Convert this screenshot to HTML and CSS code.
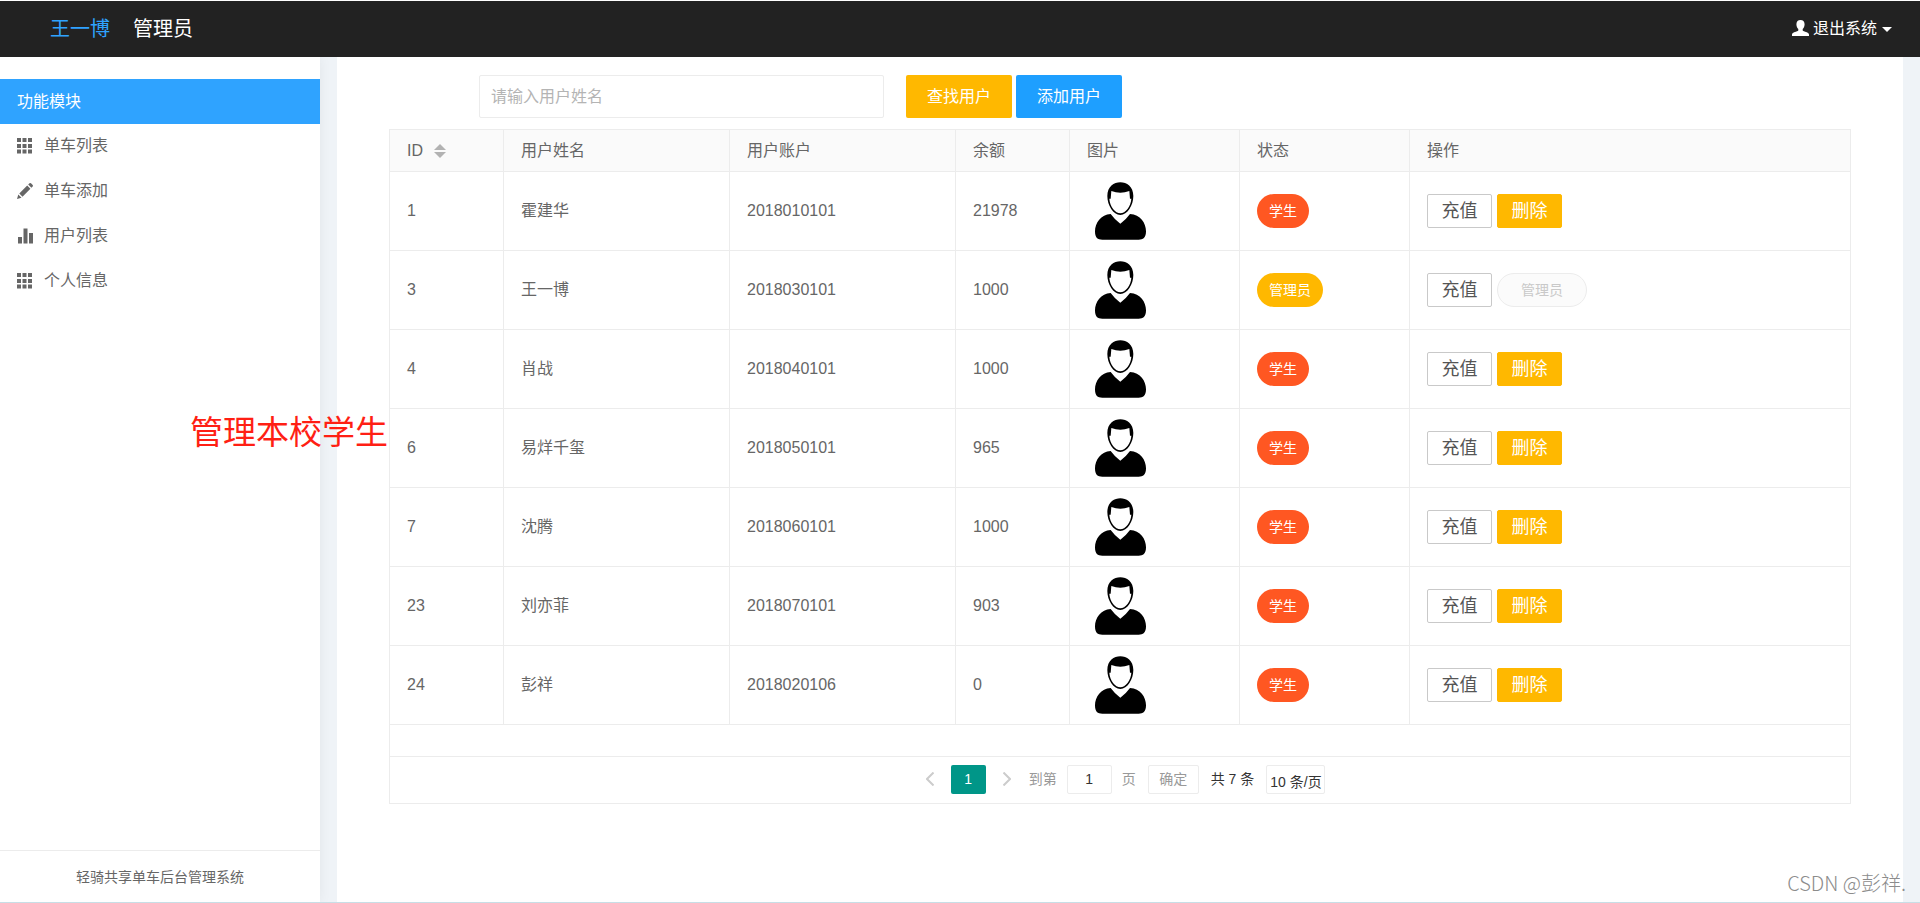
FILE: index.html
```html
<!DOCTYPE html>
<html lang="zh-CN">
<head>
<meta charset="utf-8">
<title>轻骑共享单车后台管理系统</title>
<link rel="stylesheet" href="styles.css">
</head>
<body>
<svg class="defs" width="0" height="0" aria-hidden="true">
  <symbol id="grid" viewBox="0 0 16 16"><path d="M0 0h4v4H0zM5.500 0h4v4h-4zM11 0h4v4h-4zM0 6h4v4H0zM5.500 6h4v4h-4zM11 6h4v4h-4zM0 11.500h4v4H0zM5.500 11.500h4v4h-4zM11 11.500h4v4h-4z"/></symbol>
  <symbol id="pencil" viewBox="0 0 16 16"><path d="M0 16l1.300-4.500 3.200 3.200zM2.300 10.500l7.900-7.900 3.200 3.200-7.900 7.900zM11.200 1.600l1.300-1.300q.8-.6 1.500 0l1.700 1.700q.6.8 0 1.500l-1.300 1.300z"/></symbol>
  <symbol id="bars" viewBox="0 0 16 16"><path d="M1 9h4v6.500H1zM6.500 .5h4v15h-4zM12 5h4v10.500h-4z"/></symbol>
  <symbol id="avatar" viewBox="0 0 192 192">
    <path fill-rule="evenodd" d="M100 13C119 13 139 26 139 54C139 82 121 111 100 111C79 111 61 82 61 54C61 26 81 13 100 13ZM73 39L71 62H67C68 85 85 106 100 106C115 106 132 85 133 62H129L127 39Q100 49 73 39Z"/>
    <path d="M71 108Q84 126 100 137Q116 126 129 108C160 110 177 135 177 160C177 180 168 185 155 185H46C32 185 24 180 24 160C24 135 42 110 71 108Z"/>
  </symbol>
</svg>

<header class="topbar">
  <div class="brand"><a class="brand-name" href="#">王一博</a><span>管理员</span></div>
  <button class="logout" type="button">
    <svg class="user-icon" viewBox="0 0 17 16" aria-hidden="true"><path d="M8.500 0C11 0 12.600 1.600 12.600 4.200C12.600 6.500 11.600 8 10.700 9V10.500C11.500 11.700 17 12.200 17 14.500V16H0V14.500C0 12.200 5.500 11.700 6.300 10.500V9C5.400 8 4.400 6.500 4.400 4.200C4.400 1.600 6 0 8.500 0Z"/></svg>
    <span>退出系统</span><i class="caret"></i>
  </button>
</header>

<div class="layout">
  <aside class="sidebar">
    <nav class="menu">
      <a class="menu-item active" href="#">功能模块</a>
      <a class="menu-item" href="#"><svg class="menu-icon"><use href="#grid"/></svg>单车列表</a>
      <a class="menu-item" href="#"><svg class="menu-icon"><use href="#pencil"/></svg>单车添加</a>
      <a class="menu-item" href="#"><svg class="menu-icon"><use href="#bars"/></svg>用户列表</a>
      <a class="menu-item" href="#"><svg class="menu-icon"><use href="#grid"/></svg>个人信息</a>
    </nav>
    <footer class="sidebar-footer">轻骑共享单车后台管理系统</footer>
  </aside>

  <main class="content">
    <form class="search">
      <input class="search-input" type="text" placeholder="请输入用户姓名" aria-label="用户姓名">
      <button class="btn btn-warm" type="button">查找用户</button>
      <button class="btn btn-blue" type="button">添加用户</button>
    </form>

    <section class="panel">
      <table class="users">
        <colgroup><col class="c-small"><col class="c-wide"><col class="c-wide"><col class="c-small"><col class="c-mid"><col class="c-mid"><col></colgroup>
        <thead>
          <tr><th>ID<span class="sort"><i class="sort-up"></i><i class="sort-down"></i></span></th><th>用户姓名</th><th>用户账户</th><th>余额</th><th>图片</th><th>状态</th><th>操作</th></tr>
        </thead>
        <tbody>
          <tr><td>1</td><td>霍建华</td><td>2018010101</td><td>21978</td><td><svg class="avatar"><use href="#avatar"/></svg></td><td><span class="badge">学生</span></td><td><div class="ops"><button class="op" type="button">充值</button><button class="op op-del" type="button">删除</button></div></td></tr>
          <tr><td>3</td><td>王一博</td><td>2018030101</td><td>1000</td><td><svg class="avatar"><use href="#avatar"/></svg></td><td><span class="badge badge-admin">管理员</span></td><td><div class="ops"><button class="op" type="button">充值</button><button class="op op-off" type="button" disabled>管理员</button></div></td></tr>
          <tr><td>4</td><td>肖战</td><td>2018040101</td><td>1000</td><td><svg class="avatar"><use href="#avatar"/></svg></td><td><span class="badge">学生</span></td><td><div class="ops"><button class="op" type="button">充值</button><button class="op op-del" type="button">删除</button></div></td></tr>
          <tr><td>6</td><td>易烊千玺</td><td>2018050101</td><td>965</td><td><svg class="avatar"><use href="#avatar"/></svg></td><td><span class="badge">学生</span></td><td><div class="ops"><button class="op" type="button">充值</button><button class="op op-del" type="button">删除</button></div></td></tr>
          <tr><td>7</td><td>沈腾</td><td>2018060101</td><td>1000</td><td><svg class="avatar"><use href="#avatar"/></svg></td><td><span class="badge">学生</span></td><td><div class="ops"><button class="op" type="button">充值</button><button class="op op-del" type="button">删除</button></div></td></tr>
          <tr><td>23</td><td>刘亦菲</td><td>2018070101</td><td>903</td><td><svg class="avatar"><use href="#avatar"/></svg></td><td><span class="badge">学生</span></td><td><div class="ops"><button class="op" type="button">充值</button><button class="op op-del" type="button">删除</button></div></td></tr>
          <tr><td>24</td><td>彭祥</td><td>2018020106</td><td>0</td><td><svg class="avatar"><use href="#avatar"/></svg></td><td><span class="badge">学生</span></td><td><div class="ops"><button class="op" type="button">充值</button><button class="op op-del" type="button">删除</button></div></td></tr>
        </tbody>
      </table>
      <div class="pager">
        <div class="pages">
          <button class="page-arrow" type="button" aria-label="上一页"><svg class="chevron" viewBox="0 0 8 14"><path d="M7.500 .5L1 7l6.500 6.500"/></svg></button>
          <button class="page-current" type="button">1</button>
          <button class="page-arrow" type="button" aria-label="下一页"><svg class="chevron" viewBox="0 0 8 14"><path d="M.5 .5L7 7L.5 13.500"/></svg></button>
        </div>
        <div class="jump">
          <label for="page-no">到第</label>
          <input class="page-input" id="page-no" type="text" value="1">
          <span>页</span>
        </div>
        <button class="page-ok" type="button">确定</button>
        <span class="total">共 7 条</span>
        <select class="page-size" aria-label="每页条数"><option>10 条/页</option></select>
      </div>
    </section>
  </main>
</div>

<p class="note">管理本校学生</p>
<p class="watermark">CSDN @彭祥.</p>
</body>
</html>
```

FILE: styles.css
```css
* { box-sizing: border-box; }

body {
  margin: 0;
  min-height: 100vh;
  display: flex;
  flex-direction: column;
  position: relative;
  border-top: 1px solid #fff;
  border-bottom: 1px solid #c8dee6;
  background: #eff3f7;
  color: #666;
  font: 16px/24px "Liberation Sans", "Noto Sans CJK SC", sans-serif;
}

button, input, select { font: inherit; margin: 0; }
button { padding: 0; border: 0; cursor: pointer; }
a { text-decoration: none; }
.defs { position: absolute; }

.topbar {
  display: flex;
  align-items: center;
  justify-content: space-between;
  height: 56px;
  padding: 0 28px 0 50px;
  background: #222;
  color: #fff;
}
.brand { display: flex; gap: 23px; font-size: 20px; }
.brand-name { color: #2fa3ff; }
.logout { display: flex; align-items: center; gap: 4px; background: none; color: #fff; }
.user-icon { width: 17px; height: 16px; margin-bottom: 2px; fill: #fff; }
.caret {
  margin-left: 1px;
  border: 5px solid transparent;
  border-top-color: #fff;
  border-bottom: 0;
}

.layout { flex: 1; display: flex; gap: 17px; padding-right: 17px; }

.sidebar {
  flex: 0 0 320px;
  display: flex;
  flex-direction: column;
  justify-content: space-between;
  padding-top: 22px;
  background: #fff;
  box-shadow: 0 0 12px rgba(0, 0, 0, .06);
  clip-path: inset(0 -17px 0 0);
}
.menu { display: flex; flex-direction: column; }
.menu-item {
  display: flex;
  align-items: center;
  gap: 11px;
  height: 45px;
  padding: 0 17px 1px;
  color: #666;
}
.menu-item.active { padding-bottom: 0; background: #2fa3ff; color: #fff; }
.menu-icon { width: 16px; height: 16px; fill: #666; }
.sidebar-footer {
  border-top: 1px solid #ececec;
  padding: 14px 0 13px;
  font-size: 14px;
  text-align: center;
}

.content { flex: 1; min-width: 0; padding: 18px 52px 0; background: #fff; }

.search { display: flex; gap: 4px; padding-left: 90px; margin-bottom: 11px; }
.search-input {
  width: 405px;
  height: 43px;
  margin-right: 18px;
  padding: 0 11px;
  border: 1px solid #ececec;
  border-radius: 2px;
  color: #666;
}
.search-input::placeholder { color: #b4b4b4; }
.btn { width: 106px; height: 43px; border-radius: 2px; color: #fff; }
.btn-warm { background: #ffb800; }
.btn-blue { background: #1e9fff; }

.panel { border: 1px solid #ececec; }
.users { width: 100%; table-layout: fixed; border-collapse: separate; border-spacing: 0; }
.c-small { width: 114px; }
.c-wide { width: 226px; }
.c-mid { width: 170px; }
.users th, .users td {
  padding: 0 17px;
  border-right: 1px solid #ececec;
  border-bottom: 1px solid #ececec;
  text-align: left;
  font-weight: 400;
}
.users th:last-child, .users td:last-child { border-right: 0; }
.users th { height: 42px; background: #fafafa; }
.users td { height: 79px; }
.sort {
  display: inline-flex;
  flex-direction: column;
  gap: 2px;
  margin-left: 11px;
  vertical-align: middle;
}
.sort-up, .sort-down { border: 6px solid transparent; }
.sort-up { border-top: 0; border-bottom-color: #b2b2b2; }
.sort-down { border-bottom: 0; border-top-color: #b2b2b2; }
.avatar { display: block; width: 64px; height: 64px; margin-bottom: 2px; fill: #000; }
.badge {
  display: inline-block;
  padding: 0 12px;
  border-radius: 17px;
  background: #ff5722;
  color: #fff;
  font-size: 14px;
  line-height: 34px;
  vertical-align: middle;
}
.badge-admin { background: #ffb800; }
.ops { display: flex; gap: 5px; }
.op {
  width: 65px;
  height: 34px;
  border: 1px solid #c9c9c9;
  border-radius: 2px;
  background: #fff;
  color: #555;
  font-size: 18px;
}
.op-del { border-color: #ffb800; background: #ffb800; color: #fff; }
.op-off {
  width: 90px;
  border-color: #ececec;
  border-radius: 17px;
  background: #fbfbfb;
  color: #c9c9c9;
  font-size: 14px;
}

.pager {
  display: flex;
  align-items: center;
  justify-content: center;
  gap: 12px;
  height: 47px;
  margin-top: 31px;
  padding-bottom: 2px;
  border-top: 1px solid #ececec;
  color: #333;
  font-size: 14px;
}
.pages { display: flex; gap: 6px; }
.page-arrow {
  display: flex;
  align-items: center;
  justify-content: center;
  width: 30px;
  height: 29px;
  background: none;
}
.chevron { width: 8px; height: 14px; fill: none; stroke: #ccc; stroke-width: 2px; }
.page-current { width: 35px; height: 29px; border-radius: 2px; background: #009688; color: #fff; }
.jump { display: flex; align-items: center; gap: 10px; margin-left: -5px; color: #999; }
.page-input, .page-ok, .page-size {
  height: 29px;
  border: 1px solid #ececec;
  border-radius: 2px;
  background: #fff;
}
.page-input { width: 45px; padding: 0; text-align: center; color: #333; }
.page-ok { width: 51px; color: #999; }
.page-size { appearance: none; width: 59px; padding: 6px 0 0 3px; color: #333; line-height: 20px; }

.note {
  position: absolute;
  top: 408px;
  left: 190px;
  margin: 0;
  color: #ff1f14;
  font-size: 33px;
  line-height: 48px;
}
.watermark {
  position: absolute;
  right: 14px;
  bottom: 7px;
  margin: 0;
  color: #8c8c8c;
  font-family: "Noto Sans CJK SC", sans-serif;
  font-size: 20px;
  font-weight: 300;
}
```
